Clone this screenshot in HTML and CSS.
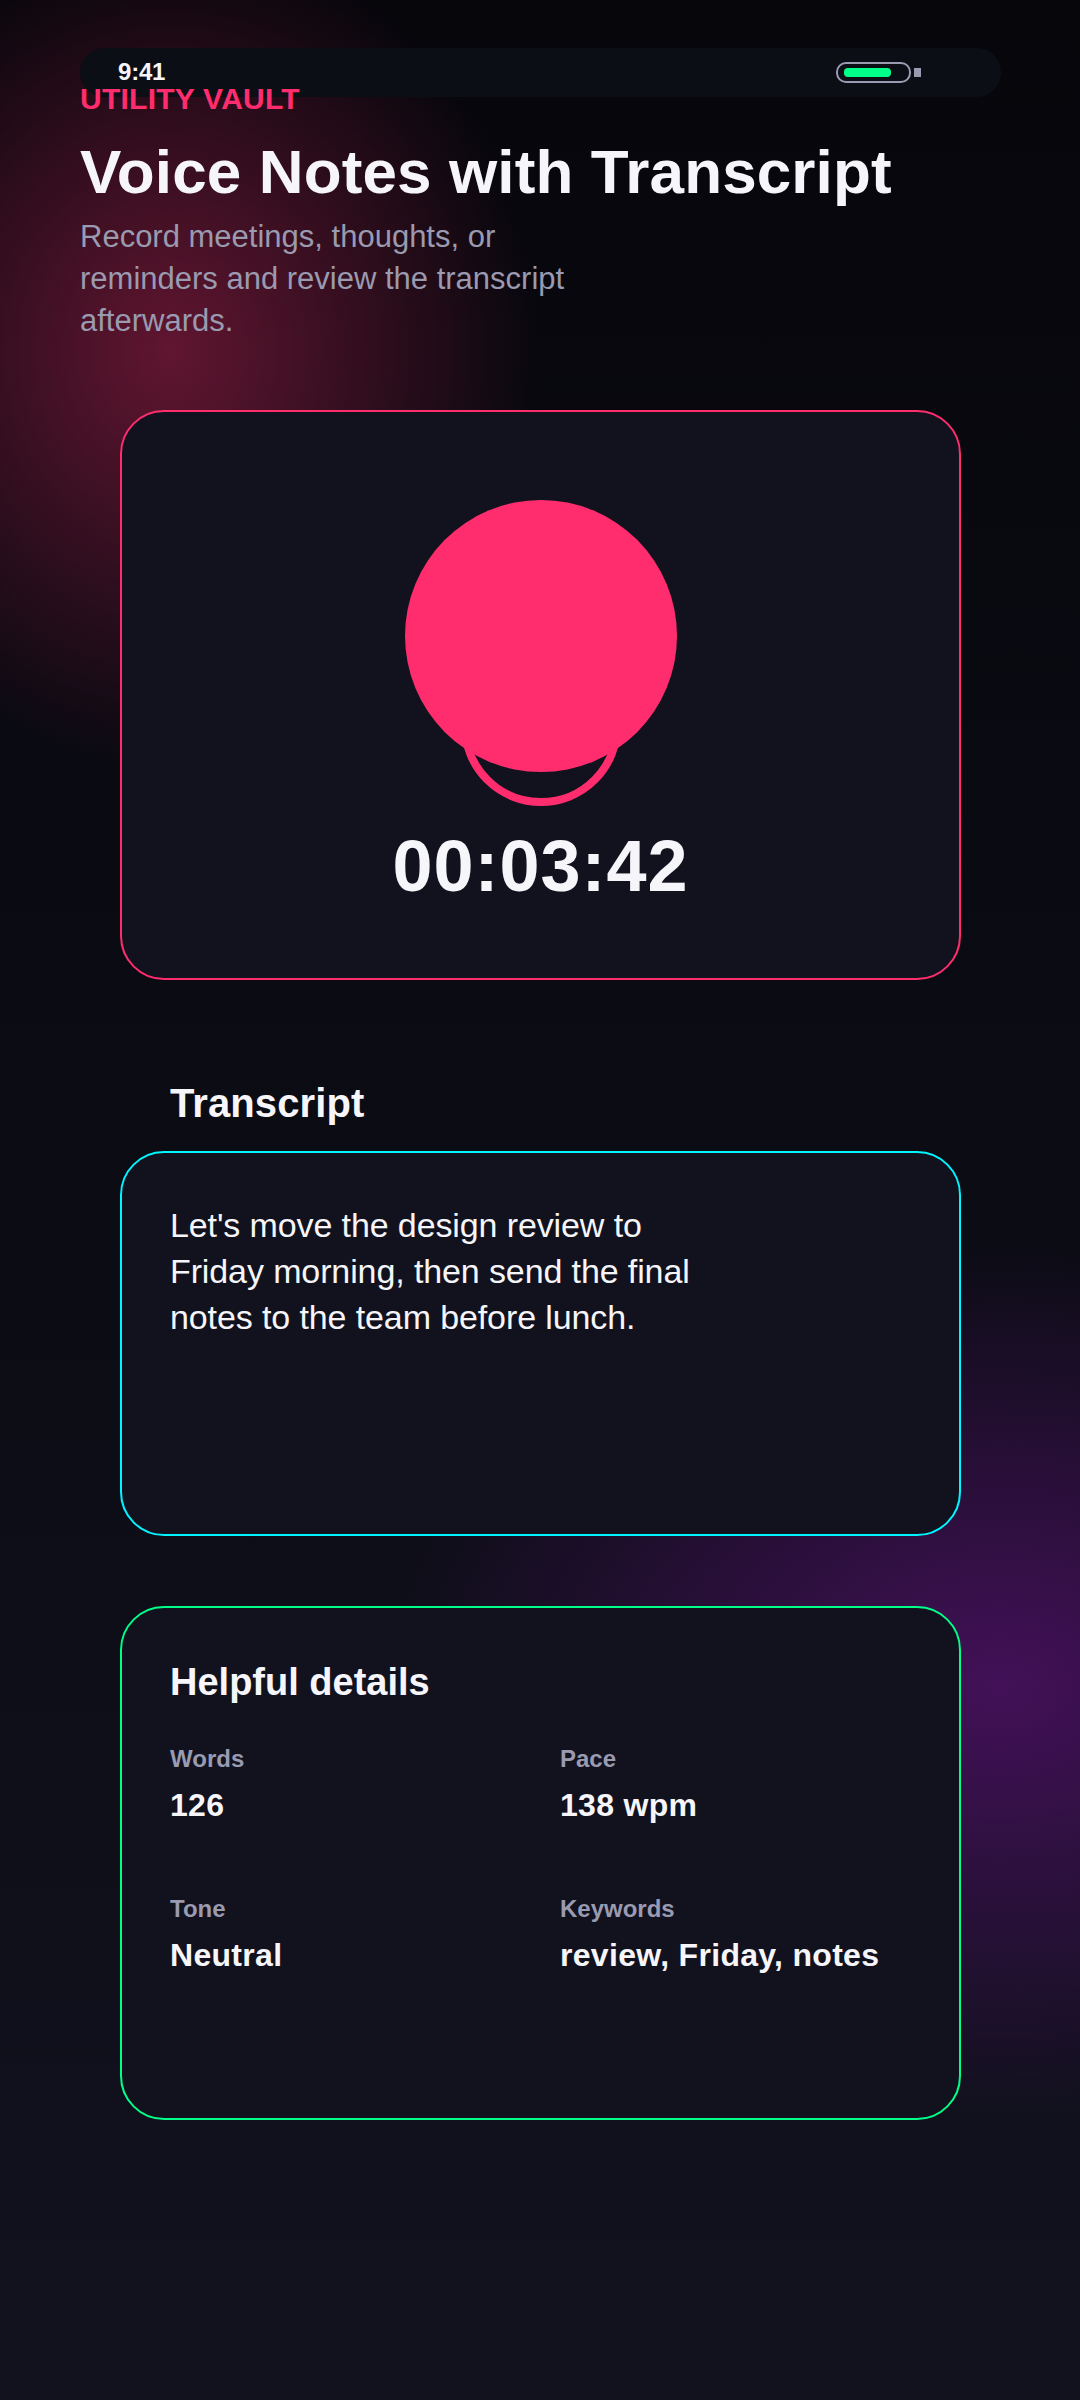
FILE: index.html
```html
<!DOCTYPE html>
<html lang="en">
<head>
<meta charset="utf-8">
<title>Voice Notes with Transcript</title>
<link rel="stylesheet" href="styles.css">
</head>
<body>
<main class="screen">
  <div class="status">
    <span class="clock">9:41</span>
    <div class="battery"><div class="battery-shell"><div class="battery-fill"></div></div><div class="battery-nub"></div></div>
  </div>
  <header class="head">
    <p class="eyebrow">UTILITY VAULT</p>
    <h1 class="title">Voice Notes with Transcript</h1>
    <p class="lede">Record meetings, thoughts, or reminders and review the transcript afterwards.</p>
  </header>
  <section class="card card-rec">
    <div class="mic"><div class="mic-head"></div><div class="mic-ring"></div></div>
    <div class="timer">00:03:42</div>
  </section>
  <h2 class="section-title">Transcript</h2>
  <section class="card card-text">
    <p class="transcript">Let's move the design review to Friday morning, then send the final notes to the team before lunch.</p>
  </section>
  <section class="card card-details">
    <h2 class="details-title">Helpful details</h2>
    <div class="stats">
      <div class="stat"><div class="stat-label">Words</div><div class="stat-value">126</div></div>
      <div class="stat"><div class="stat-label">Pace</div><div class="stat-value">138 wpm</div></div>
      <div class="stat"><div class="stat-label">Tone</div><div class="stat-value">Neutral</div></div>
      <div class="stat"><div class="stat-label">Keywords</div><div class="stat-value">review, Friday, notes</div></div>
    </div>
  </section>
</main>
</body>
</html>
```
FILE: styles.css
```css
* { box-sizing: border-box; }
html, body { margin: 0; padding: 0; }
body {
  width: 1080px;
  height: 2400px;
  overflow: hidden;
  font-family: "Liberation Sans", Arial, sans-serif;
  color: #f5f5fa;
  background: #05050a;
}
.screen {
  position: relative;
  width: 1080px;
  height: 2400px;
  padding-top: 82px;
  background:
    radial-gradient(ellipse 370px 420px at 170px 350px, rgba(255, 45, 110, 0.36), rgba(255, 45, 110, 0) 100%),
    radial-gradient(ellipse 620px 440px at 1000px 1685px, rgba(160, 20, 200, 0.36), rgba(160, 20, 200, 0) 100%),
    linear-gradient(180deg, #06060b 0%, #11121e 100%);
}
.status {
  position: absolute;
  left: 80px;
  top: 48px;
  width: 921px;
  height: 49px;
  border-radius: 24px;
  background: #0c0e16;
}
.clock {
  position: absolute;
  left: 38px;
  top: 10px;
  font-size: 24px;
  line-height: 28px;
  font-weight: 700;
  letter-spacing: -0.2px;
}
.battery {
  position: absolute;
  left: 756px;
  top: 14px;
  display: flex;
  align-items: center;
  gap: 3px;
}
.battery-shell {
  width: 75px;
  height: 21px;
  padding: 4px 6px;
  border: 2px solid #9a9ab0;
  border-radius: 10px;
}
.battery-fill {
  width: 47px;
  height: 9px;
  border-radius: 4px;
  background: #00ff88;
}
.battery-nub { width: 7px; height: 9px; background: #9a9ab0; }
.head { position: relative; padding: 0 80px; }
.eyebrow {
  margin: 0;
  font-size: 30px;
  line-height: 34px;
  font-weight: 700;
  letter-spacing: 0.25px;
  color: #ff2d6e;
}
.title {
  margin: 22px 0 0;
  font-size: 62px;
  line-height: 68px;
  font-weight: 700;
  letter-spacing: 0.12px;
}
.lede {
  margin: 10px 0 0;
  width: 500px;
  font-size: 31px;
  line-height: 42px;
  color: #9a9ab0;
}
.card {
  margin: 0 119px 0 120px;
  border: 2px solid;
  border-radius: 44px;
  background: #11121e;
}
.card-rec {
  height: 570px;
  margin-top: 68px;
  border-color: #ff2d6e;
  display: flex;
  flex-direction: column;
  align-items: center;
  padding-top: 88px;
}
.mic { position: relative; width: 272px; height: 307px; }
.mic-head {
  position: relative;
  z-index: 1;
  width: 272px;
  height: 272px;
  border-radius: 50%;
  background: #ff2d6e;
}
.mic-ring {
  position: absolute;
  left: 56px;
  top: 146px;
  width: 160px;
  height: 160px;
  border: 8px solid #ff2d6e;
  border-radius: 50%;
}
.timer {
  margin-top: 17px;
  font-size: 72px;
  line-height: 84px;
  font-weight: 700;
  letter-spacing: 1px;
}
.section-title {
  margin: 100px 170px 0;
  font-size: 40px;
  line-height: 46px;
  font-weight: 700;
  letter-spacing: 0.1px;
}
.card-text {
  height: 385px;
  margin-top: 25px;
  border-color: #00f5ff;
  padding: 49px 48px;
}
.transcript {
  margin: 0;
  width: 560px;
  font-size: 34px;
  line-height: 46px;
  letter-spacing: -0.11px;
}
.card-details {
  height: 514px;
  margin-top: 70px;
  border-color: #00ff88;
  padding: 52px 48px;
}
.details-title {
  margin: 0;
  font-size: 38px;
  line-height: 44px;
  font-weight: 700;
}
.stats {
  display: grid;
  grid-template-columns: 350px 350px;
  column-gap: 40px;
  row-gap: 40px;
  margin-top: 35px;
}
.stat { height: 110px; }
.stat-label {
  font-size: 24px;
  line-height: 40px;
  font-weight: 700;
  color: #9a9ab0;
}
.stat-value {
  font-size: 32px;
  line-height: 52px;
  font-weight: 700;
  letter-spacing: 0.3px;
}
```
